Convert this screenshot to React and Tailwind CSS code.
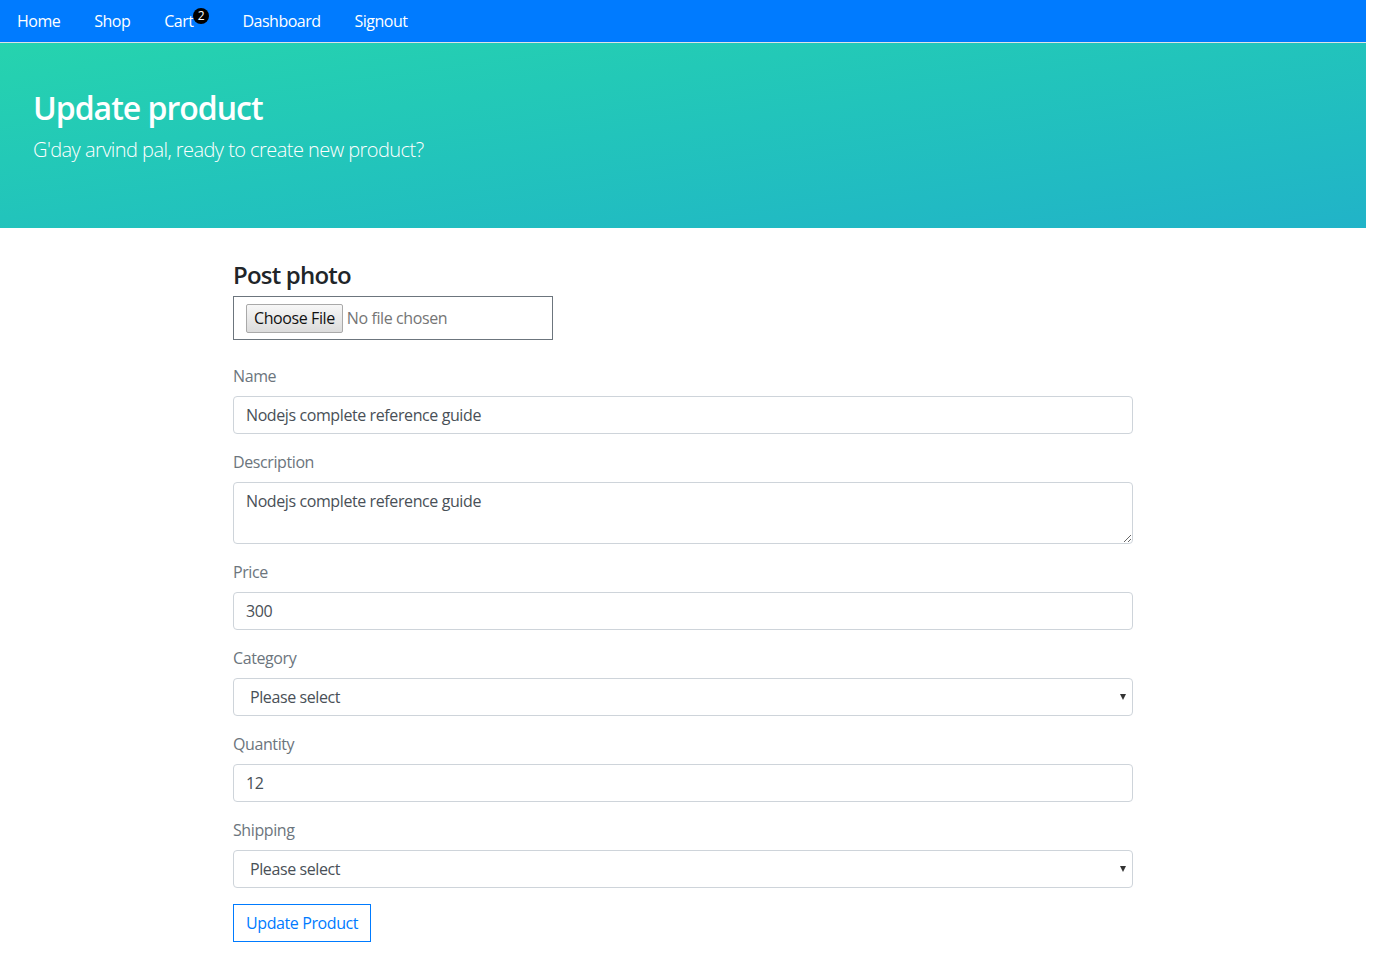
import React from 'react';

const font = { fontFamily: '"Open Sans", "Noto Sans", sans-serif' };

const NavLink = ({ children }) => (
  <a href="#" className="relative px-[17px] text-[16px] leading-[24px] tracking-[-0.5px] text-white">
    {children}
  </a>
);

const Field = ({ label, children }) => (
  <div className="mb-4">
    <label className="mb-2 block text-[16px] leading-[24px] tracking-[-0.4px] text-[#6c757d]">{label}</label>
    {children}
  </div>
);

const inputCls =
  'block h-[38px] w-full rounded-[4px] border border-[#ced4da] bg-white px-3 text-[16px] tracking-[-0.4px] text-[#495057] outline-none';

const Select = () => (
  <div className="relative">
    <select className={inputCls + ' appearance-none pl-4'} defaultValue="">
      <option value="">Please select</option>
    </select>
    <span className="pointer-events-none absolute right-[7px] top-[16px] h-0 w-0 border-x-[3.5px] border-t-[6px] border-x-transparent border-t-[#333]" />
  </div>
);

export default function App() {
  return (
    <div className="w-[1366px] bg-white" style={font}>
      {/* navbar */}
      <nav className="flex h-[43px] items-center border-b border-[#dee2e6] bg-[#007bff] pb-[1px]">
        <div className="flex">
          <NavLink>Home</NavLink>
          <NavLink>Shop</NavLink>
          <a href="#" className="relative pl-[17px] pr-[32px] text-[16px] leading-[24px] tracking-[-0.5px] text-white">
            Cart
            <span className="absolute left-[46px] top-[-1px] flex h-4 w-4 items-center justify-center rounded-full bg-black text-[12px] leading-none tracking-normal text-white">
              2
            </span>
          </a>
          <NavLink>Dashboard</NavLink>
          <NavLink>Signout</NavLink>
        </div>
      </nav>

      {/* hero */}
      <div className="bg-linear-to-br from-[#26d3ae] to-[#21b3c8] px-[33px] pb-[47px] pt-[46px] text-white">
        <h2 className="mb-2 text-[32px] font-semibold leading-[38px] tracking-[-1px]">Update product</h2>
        <p className="mb-4 text-[20px] font-light leading-[30px] tracking-[-0.55px]">
          G'day arvind pal, ready to create new product?
        </p>
      </div>

      {/* form */}
      <div className="mx-auto w-[900px] pb-4 pt-[32px]">
        <h4 className="mb-[7px] text-[24px] font-semibold leading-[29px] tracking-[-0.8px] text-[#212529]">Post photo</h4>
        <div className="mb-6 flex h-[44px] w-[320px] items-center border border-[#6c757d] px-3">
          <span className="flex h-[29px] items-center rounded-[2px] border border-[#a9a9a9] bg-linear-to-b from-[#f7f7f7] to-[#dcdcdc] px-[7px] text-[16px] tracking-[-0.4px] text-[#111]">
            Choose File
          </span>
          <span className="ml-1 text-[16px] tracking-[-0.4px] text-[#757575]">No file chosen</span>
        </div>

        <Field label="Name">
          <input className={inputCls} defaultValue="Nodejs complete reference guide" />
        </Field>
        <Field label="Description">
          <textarea
            className="block h-[62px] w-full rounded-[4px] border border-[#ced4da] bg-white px-3 py-[6px] text-[16px] leading-[24px] tracking-[-0.4px] text-[#495057] outline-none"
            defaultValue="Nodejs complete reference guide"
          />
        </Field>
        <Field label="Price">
          <input className={inputCls} defaultValue="300" />
        </Field>
        <Field label="Category">
          <Select />
        </Field>
        <Field label="Quantity">
          <input className={inputCls} defaultValue="12" />
        </Field>
        <Field label="Shipping">
          <Select />
        </Field>
        <button className="h-[38px] rounded-none border border-[#007bff] px-3 text-[16px] tracking-[-0.4px] text-[#007bff]">
          Update Product
        </button>
      </div>
    </div>
  );
}
